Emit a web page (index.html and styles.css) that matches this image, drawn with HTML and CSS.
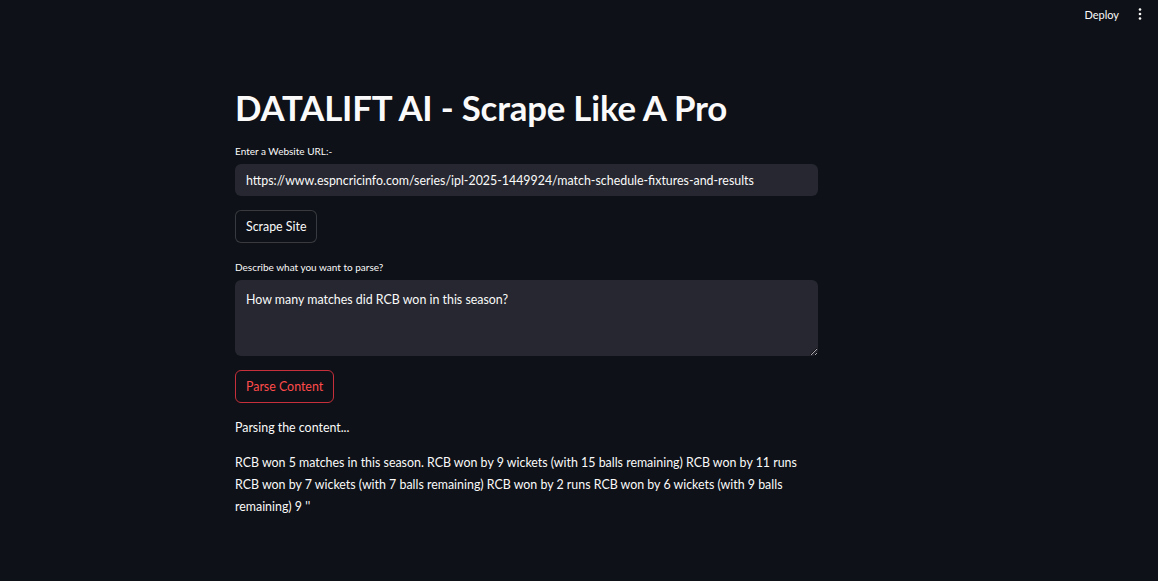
FILE: index.html
```html
<!DOCTYPE html>
<html lang="en">
<head>
  <meta charset="UTF-8">
  <title>DATALIFT AI</title>
  <link rel="stylesheet" href="styles.css">
</head>
<body>

  <header class="topbar">
    <button class="deploy">Deploy</button>
    <button class="menu" aria-label="Main menu">
      <svg width="4" height="12" viewBox="0 0 4 12">
        <circle cx="2" cy="1.5" r="1.3" fill="#fafafa"/>
        <circle cx="2" cy="6" r="1.3" fill="#fafafa"/>
        <circle cx="2" cy="10.5" r="1.3" fill="#fafafa"/>
      </svg>
    </button>
  </header>

  <main class="app">
    <h1 class="title">DATALIFT AI - Scrape Like A Pro</h1>

    <label class="field-label" for="url">Enter a Website URL:-</label>
    <input type="text" id="url" class="text-input" value="https://www.espncricinfo.com/series/ipl-2025-1449924/match-schedule-fixtures-and-results">

    <button class="btn">Scrape Site</button>

    <label class="field-label" for="query">Describe what you want to parse?</label>
    <textarea id="query" class="text-area">How many matches did RCB won in this season?</textarea>

    <button class="btn btn-primary">Parse Content</button>

    <p class="status">Parsing the content...</p>

    <p class="result">RCB won 5 matches in this season. RCB won by 9 wickets (with 15 balls remaining) RCB won by 11 runs RCB won by 7 wickets (with 7 balls remaining) RCB won by 2 runs RCB won by 6 wickets (with 9 balls remaining) 9 ''</p>
  </main>

</body>
</html>
```

FILE: styles.css
```css
:root {
  --bg: #0e1117;
  --text: #fafafa;
  --input-bg: #262730;
  --border: rgba(250, 250, 250, 0.18);
  --primary: #ff4b4b;
}

* {
  box-sizing: border-box;
}

body {
  margin: 0;
  background: var(--bg);
  color: var(--text);
  font-family: 'Lato', 'Open Sans', sans-serif;
  height: 100vh;
  overflow: hidden;
}

.topbar {
  display: flex;
  justify-content: flex-end;
  align-items: center;
  gap: 19px;
  height: 28px;
  padding: 0 16px 0 0;
}

.deploy,
.menu {
  background: none;
  border: none;
  color: var(--text);
  font-family: inherit;
  font-size: 11px;
  padding: 0;
  cursor: pointer;
}

.menu {
  display: flex;
  align-items: center;
  height: 14px;
}

.app {
  width: 583px;
  margin: 0 auto 0 235px;
  padding-top: 58px;
  display: flex;
  flex-direction: column;
  align-items: flex-start;
}

.title {
  margin: 0 0 14px;
  font-size: 34.8px;
  font-weight: 700;
  line-height: 44px;
  letter-spacing: -0.2px;
}

.field-label {
  font-size: 10px;
  line-height: 14px;
  margin-bottom: 6px;
}

.text-input,
.text-area {
  width: 100%;
  background: var(--input-bg);
  border: none;
  border-radius: 6px;
  color: var(--text);
  font-family: inherit;
  font-size: 12.4px;
  padding: 0 11px;
  outline: none;
}

.text-input {
  height: 32px;
  margin-bottom: 14px;
}

.text-area {
  height: 76px;
  padding-top: 12px;
  resize: vertical;
  margin-bottom: 14px;
}

.btn {
  height: 33px;
  padding: 0 10px;
  background: var(--bg);
  border: 1px solid var(--border);
  border-radius: 6px;
  color: var(--text);
  font-family: inherit;
  font-size: 12.4px;
  margin-bottom: 17px;
  cursor: pointer;
}

.btn-primary {
  color: var(--primary);
  border-color: #c7303a;
  margin-bottom: 14px;
}

.status,
.result {
  margin: 0;
  font-size: 12.4px;
  line-height: 22px;
}

.status {
  margin-bottom: 13px;
}
```
